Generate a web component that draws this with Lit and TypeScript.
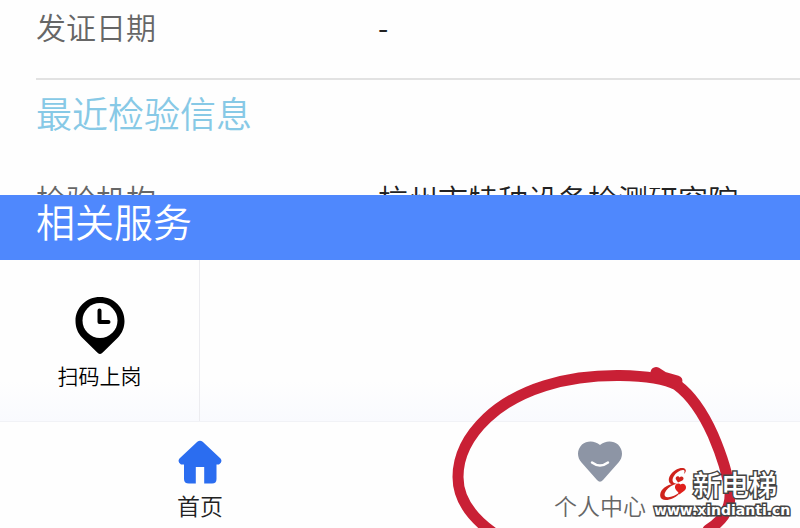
import { LitElement, html, css, svg } from "lit";
import { customElement } from "lit/decorators.js";

const pinIcon = svg`
  <path fill="#000" d="M25 58 C23.600 58 22.600 57 21.500 55.800 L7 41.500 C2.600 37 0.500 31 0.500 25 C0.500 11.500 11.300 1 25 1 C38.700 1 49.500 11.500 49.500 25 C49.500 31 47.400 37 43 41.500 L28.500 55.800 C27.400 57 26.400 58 25 58 Z"/>
  <circle cx="25" cy="24.500" r="17.500" fill="#fff"/>
  <path d="M24.500 14.500 V26 H33.500" fill="none" stroke="#000" stroke-width="4" stroke-linecap="round" stroke-linejoin="round"/>`;

const homeIcon = svg`
  <path fill="#2b6df0" d="M19.300 1.800 Q22 -0.400 24.700 1.800 L42.500 18.500 Q45 22 41 24.500 H38.500 V39 Q38.500 43.500 34 43.500 H26.200 V27 H17.800 V43.500 H11 Q6 43.500 6 39 V24.500 H3 Q-1 22 1.500 18.500 Z"/>`;

const heartIcon = svg`
  <path fill="#8d95a5" d="M22 5 C27 0.500 35 0.200 40 4.500 C45.500 10 45 17.500 40.500 22.500 L25 40 Q22 43.300 19 40 L3.500 22.500 C-1 17.500 -1.500 10 4 4.500 C9 0.200 17 0.500 22 5 Z"/>
  <path d="M14 22.500 Q22 28.500 30 22.500" fill="none" stroke="#fff" stroke-width="2.400" stroke-linecap="round"/>`;

const brandIcon = svg`
  <path fill="#cf231c" d="M26.500 2.500 C25 0.500 21 0.500 17 2.800 C12 5.800 9 10.500 10 14.500 C10.400 16 11.300 16.800 12.500 17.200 C5 19 0.800 24 1.200 29 C1.600 33.600 8 34 14 31.200 C18 29.300 20.800 27 21.500 24.500 C17 28.500 12 30.500 8.500 30.200 C4.800 29.800 5 26.500 7.200 23.500 C9.500 20.300 13.500 18 18 16.800 C13.500 16.500 12.600 13.500 14.500 9.800 C16.800 5.600 22 2.300 25 3.200 C26 3.600 25.500 5.500 24.800 7 C26.500 5.800 27.400 3.800 26.500 2.500 Z"/>
  <path fill="#cf231c" d="M20.500 10.500 C22 8.500 25 9.500 24.500 12 C24 13.800 21 14.300 19 15.500 C18.200 13.500 15.800 12 17 10.200 C18 8.900 20 9.200 20.500 10.500 Z"/>
  <path fill="#e0201c" d="M21.500 17.500 C24 15.500 27.500 17.500 27 21 C26.500 24 22.500 25.200 20.500 27.500 C19.500 24.500 15.500 23 16 19.500 C16.400 16.500 20 15.500 21.500 17.500 Z"/>`;

@customElement("app-root")
export class AppRoot extends LitElement {
  static styles = css`
    :host {
      display: flex;
      flex-direction: column;
      position: relative;
      height: 100vh;
      overflow: hidden;
      background: #fefefe;
      font-family: "Noto Sans CJK SC", sans-serif;
      font-weight: 350;
      color: #222;
    }
    * { box-sizing: border-box; }
    h2, dl, dd { margin: 0; font-weight: inherit; }
    .details {
      flex: 1 1 0;
      min-height: 0;
      overflow: hidden;
      padding-left: 36px;
    }
    .row {
      display: grid;
      grid-template-columns: 342px 1fr;
      font-size: 30px;
      line-height: 40px;
      white-space: nowrap;
    }
    .row dt { color: #666; }
    .issued { padding: 6px 0 32px; border-bottom: 2px solid #e2e2e2; }
    .recent { font-size: 36px; line-height: 64px; color: #87c9e6; }
    .agency { padding-top: 34px; }
    .banner {
      flex: none;
      padding: 0 36px;
      height: 65px;
      background: #4f88fd;
      color: #fff;
      font-size: 39px;
      line-height: 50px;
    }
    .services {
      flex: none;
      display: grid;
      grid-template-columns: repeat(4, 1fr);
      background: linear-gradient(#fefefe 75%, #f9fafe);
    }
    .service, .tab {
      display: flex;
      flex-direction: column;
      align-items: center;
      border: 0;
      margin: 0;
      background: none;
      font: inherit;
      text-decoration: none;
    }
    .service {
      padding: 36px 0 30px;
      border-right: 1px solid #ececf0;
      color: #000;
      font-size: 21px;
      line-height: 32px;
      gap: 5px;
    }
    .tabs {
      flex: none;
      position: relative;
      display: grid;
      grid-template-columns: 1fr 1fr;
      border-top: 1px solid #f1f2f6;
      background: #fefefe;
    }
    .tab {
      padding: 18px 0 7px;
      font-size: 23px;
      line-height: 32px;
      gap: 5px;
      color: #666;
    }
    .tab.active { color: #222; }
    svg { display: block; }
    .ring {
      position: absolute;
      left: 50%;
      bottom: 0;
      margin-left: 40px;
      pointer-events: none;
    }
    .mark {
      position: absolute;
      right: 8px;
      bottom: 10px;
      width: 138px;
      color: #fff;
      -webkit-text-stroke: 3px #444;
      paint-order: stroke fill;
      white-space: nowrap;
    }
    .brand {
      display: flex;
      align-items: center;
      gap: 6px;
      padding-left: 5px;
      font-size: 28px;
      font-weight: 500;
      line-height: 36px;
    }
    .site {
      font-family: "DejaVu Sans", sans-serif;
      font-size: 14px;
      font-weight: 700;
      line-height: 16px;
    }
  `;

  render() {
    return html`
      <section class="details">
        <dl class="row issued"><dt>发证日期</dt><dd>-</dd></dl>
        <h2 class="recent">最近检验信息</h2>
        <dl class="row agency"><dt>检验机构</dt><dd>杭州市特种设备检测研究院</dd></dl>
      </section>
      <h2 class="banner">相关服务</h2>
      <section class="services">
        <button class="service" type="button">
          <svg width="50" height="58" viewBox="0 0 50 58" aria-hidden="true">${pinIcon}</svg>
          <span>扫码上岗</span>
        </button>
      </section>
      <nav class="tabs">
        <a class="tab active" href="#home">
          <svg width="44" height="44" viewBox="0 0 44 44" aria-hidden="true">${homeIcon}</svg>
          <span>首页</span>
        </a>
        <a class="tab" href="#me">
          <svg width="44" height="44" viewBox="0 0 44 44" aria-hidden="true">${heartIcon}</svg>
          <span>个人中心</span>
        </a>
        <svg class="ring" width="310" height="168" viewBox="440 360 310 168" fill="none" stroke="#c92035" stroke-linecap="round" aria-hidden="true">
          <path stroke-width="11" d="M492 532 C470 516 458 498 458 477 C458 456 468 436 487 418 C518 389 566 375 620 375.500 C646 376 666 379 677 385 C692 396 704 415 713 435 C722 456 728 475 730 492 C731 508 724 520 708 530"/>
          <path stroke-width="11" d="M656 372.500 L663 377 L677 381"/>
        </svg>
      </nav>
      <aside class="mark">
        <div class="brand">
          <svg width="28" height="34" viewBox="0 0 28 34" aria-hidden="true">${brandIcon}</svg>
          <span>新电梯</span>
        </div>
        <div class="site">www.xindianti.cn</div>
      </aside>
    `;
  }
}
